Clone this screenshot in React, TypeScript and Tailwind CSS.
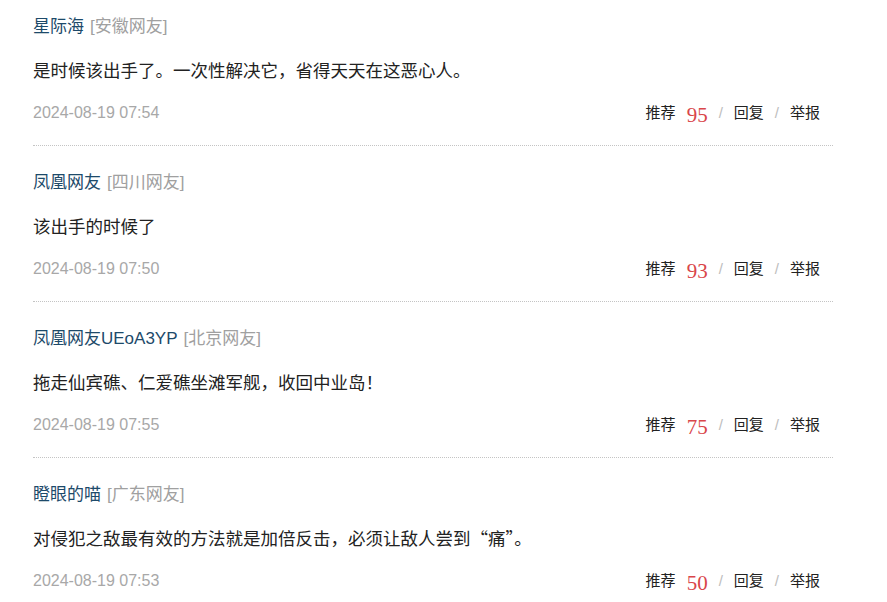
import React from "react";

type Comment = {
  name: string;
  region: string;
  content: string;
  time: string;
  likes: number;
};

const comments: Comment[] = [
  {
    name: "星际海",
    region: "安徽网友",
    content: "是时候该出手了。一次性解决它，省得天天在这恶心人。",
    time: "2024-08-19 07:54",
    likes: 95,
  },
  {
    name: "凤凰网友",
    region: "四川网友",
    content: "该出手的时候了",
    time: "2024-08-19 07:50",
    likes: 93,
  },
  {
    name: "凤凰网友UEoA3YP",
    region: "北京网友",
    content: "拖走仙宾礁、仁爱礁坐滩军舰，收回中业岛！",
    time: "2024-08-19 07:55",
    likes: 75,
  },
  {
    name: "瞪眼的喵",
    region: "广东网友",
    content: "对侵犯之敌最有效的方法就是加倍反击，必须让敌人尝到“痛”。",
    time: "2024-08-19 07:53",
    likes: 50,
  },
];

function CommentItem({ comment, first }: { comment: Comment; first: boolean }) {
  return (
    <div
      className={`${first ? "pt-[15px]" : "pt-[25px]"} pb-[20px] border-b border-dotted border-[#c4c4c4]`}
    >
      <div className="h-6 leading-6 text-[17px] whitespace-nowrap">
        <span className="text-[#1d4a6a]">{comment.name}</span>
        <span className="ml-[6px] text-[#a0a0a0]">[{comment.region}]</span>
      </div>
      {/* CJK font first so the curly quotes render full width */}
      <div className="mt-[19px] h-6 leading-6 text-[17.5px] text-[#222] font-['Noto_Sans_CJK_SC',sans-serif]">
        {comment.content}
      </div>
      <div className="mt-[19px] h-6 flex items-center justify-between">
        <span className="text-[16px] text-[#a8a8a8]">{comment.time}</span>
        <div className="flex items-center pr-[13px] text-[15px] text-[#222]">
          <span>推荐</span>
          <span className="ml-[11px] text-[21px] leading-none text-[#d9464a] font-['Liberation_Serif',serif] translate-y-[2px]">
            {comment.likes}
          </span>
          <span className="mx-[11px] text-[#bdbdbd]">/</span>
          <span>回复</span>
          <span className="mx-[11px] text-[#bdbdbd]">/</span>
          <span>举报</span>
        </div>
      </div>
    </div>
  );
}

export default function App() {
  return (
    <div className="w-[887px] h-[602px] overflow-hidden bg-white font-['Liberation_Sans','Noto_Sans_CJK_SC',sans-serif]">
      <div className="ml-[33px] w-[800px]">
        {comments.map((c, i) => (
          <CommentItem key={i} comment={c} first={i === 0} />
        ))}
      </div>
    </div>
  );
}
